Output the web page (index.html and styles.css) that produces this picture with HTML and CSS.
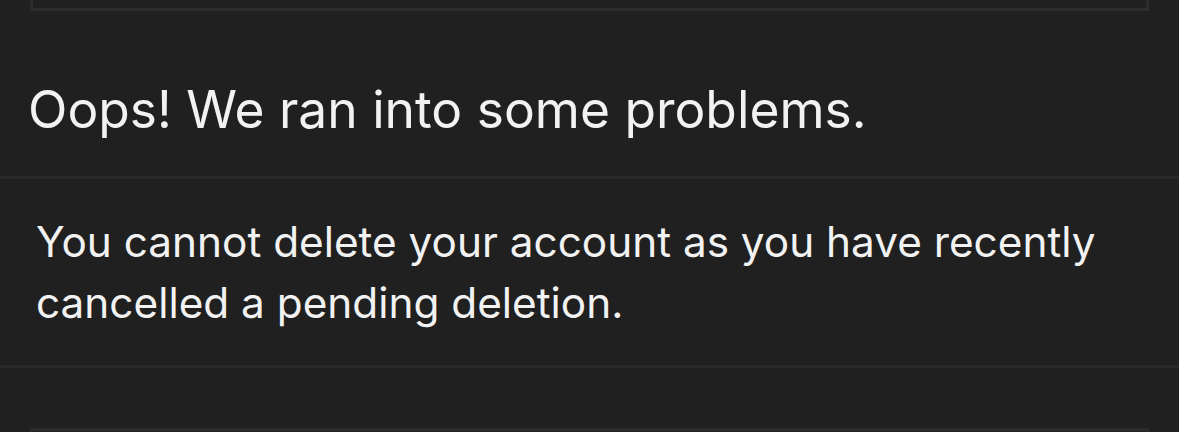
FILE: index.html
```html
<!DOCTYPE html>
<html lang="en">

<head>

  <meta charset="utf-8">

  <title>Delete account</title>

  <link rel="stylesheet" href="styles.css">
</head>

<body>

  <div class="card card-above"></div>

  <div class="row row-title">
    <h1 class="title">Oops! We ran into some problems.</h1>
  </div>

  <div class="row row-message">
    <p class="message">You cannot delete your account as you have recently cancelled a pending deletion.</p>
  </div>

  <div class="gap"></div>

  <div class="card card-below"></div>

</body>

</html>
```

FILE: styles.css
```css
body {
  margin: 0;
  background: #202020;
  color: #f2f2f2;
  font-family: Inter, "Liberation Sans", sans-serif;
  overflow: hidden;
}

.card {
  margin: 0 30px;
  border: 3px solid #2c2c2c;
}

.card-above {
  height: 8px;
  border-top: none;
}

.card-below {
  height: 1px;
  border-bottom: none;
}

.row {
  box-sizing: border-box;
  border-bottom: 3px solid #2a2a2a;
}

.row-title {
  height: 168px;
  padding: 69px 0 0 28px;
}

.row-message {
  height: 189px;
  padding: 32px 0 0 36px;
}

.title {
  margin: 0;
  font-size: 51.5px;
  font-weight: 400;
  line-height: 58px;
}

.message {
  margin: 0;
  width: 1110px;
  font-size: 42.3px;
  line-height: 61px;
}

.gap {
  height: 60px;
}
```
